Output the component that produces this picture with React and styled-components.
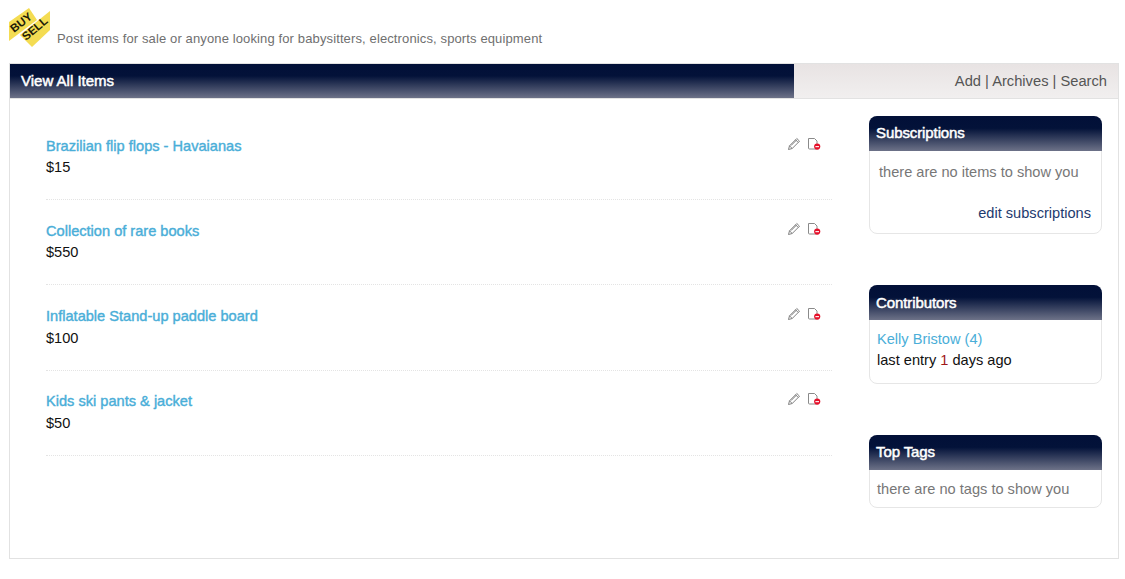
import React from 'react';
import styled, { createGlobalStyle } from 'styled-components';

const GlobalStyle = createGlobalStyle`
  html, body {
    margin: 0;
    padding: 0;
    background: #fff;
    font-family: "Liberation Sans", Arial, sans-serif;
  }
`;

const Page = styled.div`
  width: 1125px;
  height: 579px;
  box-sizing: border-box;
  padding: 8px 6px 0 9px;
  overflow: hidden;
`;

const Intro = styled.div`
  display: flex;
  align-items: flex-start;
  height: 55px;
  margin-left: -1px;
`;

const Tagline = styled.p`
  align-self: flex-end;
  margin: 0 0 17px 6px;
  font-size: 13px;
  line-height: 15px;
  color: #6f6f6f;
  letter-spacing: 0.125px;
`;

const Panel = styled.div`
  height: 496px;
  box-sizing: border-box;
  border: 1px solid #e2e2e2;
  display: flex;
  flex-direction: column;
`;

const TopBar = styled.div`
  display: flex;
  height: 34px;
  border-bottom: 1px solid #e2e2e2;
`;

const ViewTab = styled.div`
  width: 784px;
  box-sizing: border-box;
  padding-left: 11px;
  line-height: 34px;
  font-size: 15px;
  color: #fff;
  -webkit-text-stroke: 0.5px #fff;
  background: linear-gradient(#021038 0%, #031239 35%, #6d7288 100%);
`;

const ActionBar = styled.div`
  flex: 1;
  text-align: right;
  padding-right: 11px;
  line-height: 34px;
  font-size: 14.7px;
  color: #555;
  background: linear-gradient(#e8e3e3, #f1efef);
`;

const Body = styled.div`
  flex: 1;
  display: flex;
  padding: 16px 16px 0 36px;
`;

const ItemList = styled.div`
  width: 786px;
`;

const Item = styled.div`
  position: relative;
  height: 85.2px;
  box-sizing: border-box;
  padding-top: 20.5px;
  border-bottom: 1px dotted #e4e4e4;
`;

const ItemTitle = styled.a`
  display: block;
  font-size: 14.6px;
  line-height: 20px;
  color: #4aaed8;
  -webkit-text-stroke: 0.4px #4aaed8;
`;

const Price = styled.div`
  margin-top: 1.7px;
  font-size: 14.6px;
  line-height: 21px;
  color: #111;
`;

const ItemIcons = styled.div`
  position: absolute;
  top: 20.8px;
  right: 11px;
  display: flex;
  gap: 6px;
`;

const Sidebar = styled.aside`
  width: 233px;
  margin: 1px 0 0 37px;
  display: flex;
  flex-direction: column;
`;

const Card = styled.section`
  height: ${(p) => p.$height}px;
  margin-bottom: ${(p) => p.$gap}px;
  box-sizing: border-box;
  border: 1px solid #e6e6e6;
  border-radius: 8px;
  background: #fff;
`;

const CardHead = styled.h3`
  margin: -1px -1px 0;
  height: 35px;
  box-sizing: border-box;
  padding-left: 7px;
  line-height: ${(p) => p.$lineHeight || 33}px;
  font-size: 15px;
  font-weight: normal;
  letter-spacing: -0.1px;
  color: #fff;
  -webkit-text-stroke: 0.5px #fff;
  border-radius: 8px 8px 0 0;
  background: linear-gradient(#021038 0%, #031239 35%, #6d7288 100%);
`;

const CardBody = styled.div`
  padding: ${(p) => p.$top}px 10px 0 ${(p) => p.$left}px;
  font-size: 14.6px;
  line-height: 21px;
`;

const Muted = styled.div`
  color: #777;
`;

const EditLink = styled.a`
  display: block;
  margin-top: 20px;
  text-align: right;
  color: #1d3a6e;
`;

const PersonLink = styled.a`
  display: block;
  color: #4aaed8;
`;

const LastEntry = styled.div`
  color: #111;
  span {
    color: #a01818;
  }
`;

const Logo = () => (
  <svg width="43" height="40" viewBox="0 0 43 40">
    <polygon points="1,14 21,0 29,12 1,33" fill="#f4dc52" />
    <polygon points="12,27 42,3 42,22 24,39" fill="#f4dc52" />
    <text x="0" y="0" transform="translate(6 25) rotate(-38)" fontFamily="Liberation Sans" fontWeight="bold" fontSize="11.5" fill="#1e1a08">BUY</text>
    <text x="0" y="0" transform="translate(18 33) rotate(-40)" fontFamily="Liberation Sans" fontWeight="bold" fontSize="11.5" fill="#1e1a08">SELL</text>
  </svg>
);

const PencilIcon = () => (
  <svg width="14" height="15" viewBox="0 0 14 15" fill="none" stroke="#808080" strokeWidth="1">
    <path d="M1.5 13.5 L2.5 9.8 L9.8 2.5 L12.5 5.2 L5.2 12.5 Z" />
    <path d="M2.5 9.8 L5.2 12.5 M8.6 3.8 L11.2 6.4 M4 9.6 L9.6 4" />
  </svg>
);

const RemoveDocIcon = () => (
  <svg width="14" height="15" viewBox="0 0 14 15">
    <path d="M1.5 2.5 H7.5 L10 5 V12 Q10 13 9 13 H2.5 Q1.5 13 1.5 12 Z" fill="#fff" stroke="#8a8a8a" strokeWidth="1" />
    <circle cx="10.2" cy="10.6" r="3.1" fill="#e5102a" />
    <rect x="8.4" y="10.1" width="3.6" height="1.1" fill="#fff" />
  </svg>
);

const items = [
  { title: 'Brazilian flip flops - Havaianas', price: '$15' },
  { title: 'Collection of rare books', price: '$550' },
  { title: 'Inflatable Stand-up paddle board', price: '$100' },
  { title: 'Kids ski pants & jacket', price: '$50' },
];

export default function App() {
  return (
    <Page>
      <GlobalStyle />
      <Intro>
        <Logo />
        <Tagline>Post items for sale or anyone looking for babysitters, electronics, sports equipment</Tagline>
      </Intro>
      <Panel>
        <TopBar>
          <ViewTab>View All Items</ViewTab>
          <ActionBar>Add | Archives | Search</ActionBar>
        </TopBar>
        <Body>
          <ItemList>
            {items.map((item) => (
              <Item key={item.title}>
                <ItemTitle>{item.title}</ItemTitle>
                <Price>{item.price}</Price>
                <ItemIcons>
                  <PencilIcon />
                  <RemoveDocIcon />
                </ItemIcons>
              </Item>
            ))}
          </ItemList>
          <Sidebar>
            <Card $height={118} $gap={51}>
              <CardHead>Subscriptions</CardHead>
              <CardBody $top={11} $left={9}>
                <Muted>there are no items to show you</Muted>
                <EditLink>edit subscriptions</EditLink>
              </CardBody>
            </Card>
            <Card $height={99} $gap={51}>
              <CardHead $lineHeight={35}>Contributors</CardHead>
              <CardBody $top={9} $left={7}>
                <PersonLink>Kelly Bristow (4)</PersonLink>
                <LastEntry>last entry <span>1</span> days ago</LastEntry>
              </CardBody>
            </Card>
            <Card $height={73} $gap={0}>
              <CardHead>Top Tags</CardHead>
              <CardBody $top={9} $left={7}>
                <Muted>there are no tags to show you</Muted>
              </CardBody>
            </Card>
          </Sidebar>
        </Body>
      </Panel>
    </Page>
  );
}
